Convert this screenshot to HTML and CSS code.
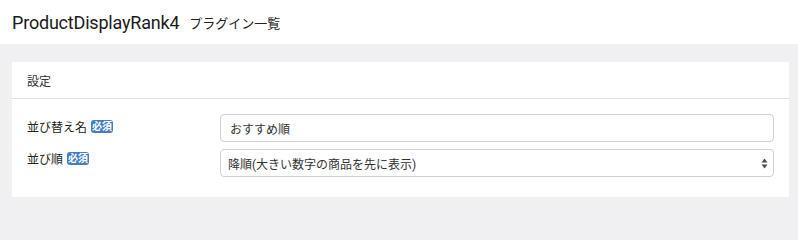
FILE: index.html
```html
<!DOCTYPE html>
<html lang="ja">
<head>
<meta charset="utf-8">
<link rel="stylesheet" href="styles.css">
</head>
<body>
<header class="page-header">
  <h1 class="title">ProductDisplayRank4</h1>
  <span class="subtitle">プラグイン一覧</span>
</header>
<main class="content">
  <section class="card">
    <div class="card-header">設定</div>
    <div class="card-body">
      <div class="form-row">
        <div class="label label-first">並び替え名<span class="badge">必須</span></div>
        <div class="field"><input class="control" type="text" value="おすすめ順"></div>
      </div>
      <div class="form-row">
        <div class="label label-second">並び順<span class="badge">必須</span></div>
        <div class="field">
          <div class="select control">
            <span class="select-text">降順(大きい数字の商品を先に表示)</span>
            <svg class="arrows" width="7" height="11" viewBox="0 0 7 11"><path d="M3.5 0.5 L6.5 4.5 H0.5 Z" fill="#4a4a5a"/><path d="M3.5 10.5 L6.5 6.5 H0.5 Z" fill="#4a4a5a"/></svg>
          </div>
        </div>
      </div>
    </div>
  </section>
</main>
</body>
</html>
```

FILE: styles.css
```css
* { box-sizing: border-box; }
html, body { margin: 0; padding: 0; }
body {
  width: 798px;
  height: 222px;
  background: #f0f0f3;
  font-family: Roboto, "Noto Sans CJK JP", sans-serif;
  color: #222;
  overflow: hidden;
}
.page-header {
  height: 44px;
  background: #fff;
  display: flex;
  align-items: center;
  padding: 0 12px;
  gap: 10px;
}
.title {
  margin: 0;
  font-size: 18px;
  font-weight: 400;
  color: #1a1a1a;
  letter-spacing: -0.2px;
}
.subtitle {
  font-size: 13px;
  color: #222;
}
.content {
  padding: 18px 9px 0 12px;
}
.card {
  background: #fff;
  height: 135px;
}
.card-header {
  height: 37px;
  border-bottom: 1px solid #e0e0e0;
  padding: 0 15px;
  display: flex;
  align-items: center;
  font-size: 12px;
  color: #333;
}
.card-body {
  padding: 15px 15px 0 15px;
  display: flex;
  flex-direction: column;
  gap: 7px;
}
.form-row {
  display: flex;
  height: 28px;
}
.label {
  width: 193px;
  font-size: 12px;
  color: #222;
  display: flex;
  align-items: center;
  align-self: flex-start;
  height: 14px;
}
.label-first { margin-top: 5px; }
.label-second { margin-top: 2px; }
.badge {
  display: inline-block;
  margin-left: 4px;
  background: #437ec4;
  color: #fff;
  font-size: 10px;
  font-weight: 700;
  line-height: 13px;
  height: 13px;
  padding: 0 1px;
  border-radius: 3px;
}
.field {
  flex: 1;
}
.control {
  width: 554px;
  height: 28px;
  border: 1px solid #cfd0d8;
  border-radius: 4px;
  background: #fff;
  font-family: inherit;
  font-size: 12px;
  color: #333;
  padding: 0 9px;
  margin: 0;
  outline: none;
}
.select {
  display: flex;
  align-items: center;
  justify-content: space-between;
  padding: 0 5px 0 7px;
}
.arrows { display: block; }
```
